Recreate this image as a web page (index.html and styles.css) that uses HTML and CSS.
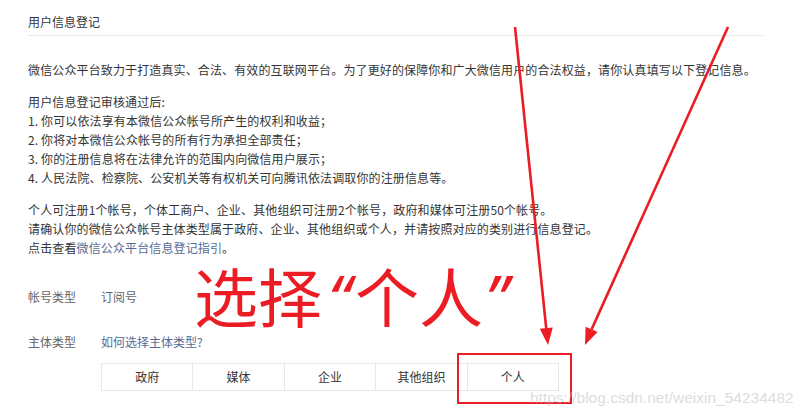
FILE: index.html
```html
<!DOCTYPE html>
<html lang="zh-CN">
<head>
<meta charset="utf-8">
<title>用户信息登记</title>
<link rel="stylesheet" href="styles.css">
</head>
<body>
<div class="page">
  <div class="title">用户信息登记</div>
  <div class="content">
    <p class="para">微信公众平台致力于打造真实、合法、有效的互联网平台。为了更好的保障你和广大微信用户的合法权益，请你认真填写以下登记信息。</p>
    <p class="para">用户信息登记审核通过后:<br>1. 你可以依法享有本微信公众帐号所产生的权利和收益；<br>2. 你将对本微信公众帐号的所有行为承担全部责任；<br>3. 你的注册信息将在法律允许的范围内向微信用户展示；<br>4. 人民法院、检察院、公安机关等有权机关可向腾讯依法调取你的注册信息等。</p>
    <p class="para">个人可注册1个帐号，个体工商户、企业、其他组织可注册2个帐号，政府和媒体可注册50个帐号。<br>请确认你的微信公众帐号主体类型属于政府、企业、其他组织或个人，并请按照对应的类别进行信息登记。<br>点击查看<a class="link" href="#">微信公众平台信息登记指引</a>。</p>
    <div class="row row-account">
      <span class="label">帐号类型</span>
      <span class="value">订阅号</span>
    </div>
    <div class="row row-subject">
      <span class="label">主体类型</span>
      <a class="link" href="#">如何选择主体类型?</a>
    </div>
    <div class="types">
      <div class="type">政府</div>
      <div class="type">媒体</div>
      <div class="type">企业</div>
      <div class="type">其他组织</div>
      <div class="type">个人</div>
    </div>
  </div>
</div>

<div class="annot-text">选择<span class="quote q-open">“</span>个人<span class="quote q-close">”</span></div>
<div class="annot-box"></div>
<svg class="annot-arrows" width="810" height="418" viewBox="0 0 810 418">
  <line x1="515" y1="27" x2="546.3" y2="329" stroke="#ec1c24" stroke-width="2.6"/>
  <polygon points="548,345 552.8,327.4 539.8,328.8" fill="#ec1c24"/>
  <line x1="728" y1="27" x2="591.6" y2="329.4" stroke="#ec1c24" stroke-width="2.6"/>
  <polygon points="585,345 597.6,332.1 585.6,326.7" fill="#ec1c24"/>
</svg>
<div class="watermark">https://blog.csdn.net/weixin_54234482</div>
</body>
</html>
```

FILE: styles.css
```css
html, body {
  margin: 0;
  padding: 0;
  background: #fff;
}
body {
  width: 810px;
  height: 418px;
  overflow: hidden;
  position: relative;
  font-family: "Noto Sans CJK SC", "Noto Sans", sans-serif;
  font-size: 12px;
  color: #353535;
}
.page {
  padding: 0 47px 0 28px;
}
.title {
  padding-top: 12px;
  padding-bottom: 4px;
  line-height: 19px;
  border-bottom: 1px solid #e7e7e7;
  color: #353535;
}
.content {
  padding-top: 24px;
}
.para {
  margin: 0 0 13px 0;
  line-height: 19px;
  letter-spacing: 0.13px;
}
.link {
  color: #576b95;
  text-decoration: none;
}
.row {
  display: flex;
  line-height: 19px;
}
.row-account {
  margin-top: 30px;
}
.row-subject {
  margin-top: 26px;
}
.label {
  width: 73px;
  color: #666;
}
.value {
  color: #666;
}
.types {
  margin: 12px 0 0 73px;
  width: 457px;
  display: grid;
  grid-template-columns: repeat(5, 1fr);
  border: 1px solid #e7e7e7;
  border-right: none;
}
.type {
  height: 26px;
  line-height: 26px;
  text-align: center;
  border-right: 1px solid #e7e7e7;
  color: #353535;
}
.annot-text {
  position: absolute;
  left: 194px;
  top: 267px;
  font-size: 64px;
  line-height: 0.86;
  color: #ec1c24;
  white-space: nowrap;
}
.quote {
  font-family: "Noto Sans", "DejaVu Sans", sans-serif;
  font-style: italic;
  display: inline-block;
}
.q-open {
  margin-left: 6px;
  margin-right: 4px;
}
.q-close {
  margin-left: 2px;
}
.annot-box {
  position: absolute;
  left: 457px;
  top: 353px;
  width: 111px;
  height: 47px;
  border: 2px solid #ec1c24;
}
.annot-arrows {
  position: absolute;
  left: 0;
  top: 0;
}
.watermark {
  position: absolute;
  left: 530px;
  top: 388px;
  font-family: "Liberation Sans", Arial, sans-serif;
  font-size: 15.5px;
  line-height: 20px;
  color: rgba(190, 190, 190, 0.55);
  white-space: nowrap;
}
```
